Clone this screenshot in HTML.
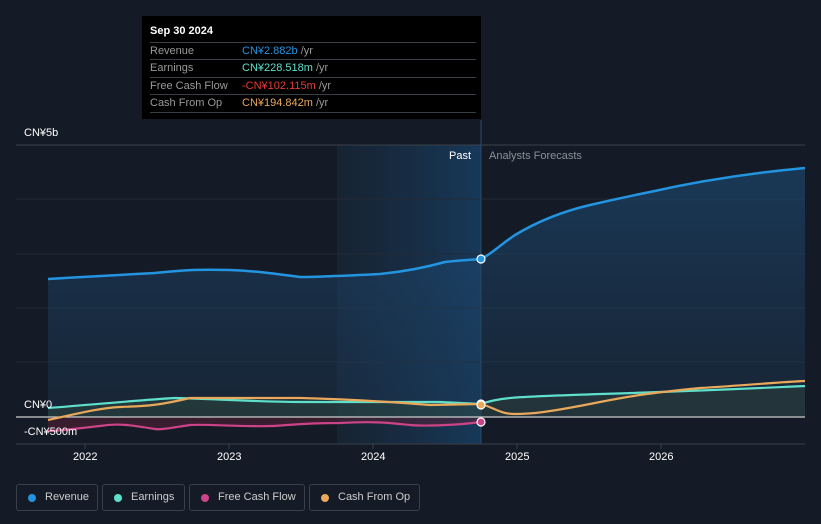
<!DOCTYPE html>
<html><head><meta charset="utf-8"><style>
body{margin:0;width:821px;height:524px;background:#151b26;font-family:"Liberation Sans",sans-serif;overflow:hidden;position:relative}
.tip{position:absolute;left:142px;top:16px;width:339px;height:103px;background:#000;color:#fff;font-size:11px}
.tip .h{position:absolute;left:8px;top:9px;font-weight:bold}
.row{position:absolute;left:8px;width:326px;height:17px;border-top:1px solid #3a3f47;line-height:17px;color:#999}
.row span{position:absolute;left:92px}
.leg{position:absolute;top:484px;height:27px;border:1px solid #3a404a;border-radius:3px;color:#ccc;font-size:11px;line-height:25px;box-sizing:border-box}
.leg i{position:absolute;left:11px;top:9px;width:8px;height:8px;border-radius:50%}
.leg b{font-weight:normal;position:absolute;left:28px}
.t{position:absolute;font-size:11px;color:#fff}
</style></head><body>
<svg width="821" height="524" style="position:absolute;left:0;top:0">
<defs>
<linearGradient id="hl" x1="0" x2="1"><stop offset="0" stop-color="#1a3550" stop-opacity=".3"/><stop offset="1" stop-color="#174066" stop-opacity=".8"/></linearGradient>
<linearGradient id="rv" x1="0" y1="0" x2="0" y2="1"><stop offset="0" stop-color="#1d4f7c" stop-opacity=".7"/><stop offset="1" stop-color="#1d3a58" stop-opacity=".4"/></linearGradient>
</defs>
<rect x="337" y="145" width="144" height="299" fill="url(#hl)"/>
<line x1="16" y1="145" x2="805" y2="145" stroke="#3a404a"/>
<line x1="16" y1="199" x2="805" y2="199" stroke="#232a36"/>
<line x1="16" y1="254" x2="805" y2="254" stroke="#232a36"/>
<line x1="16" y1="308" x2="805" y2="308" stroke="#232a36"/>
<line x1="16" y1="362" x2="805" y2="362" stroke="#232a36"/>
<line x1="481" y1="120" x2="481" y2="444" stroke="#2b4a66"/>
<path d="M48,279 C80,277 100,276 155,273 C175,271 190,269 230,270 C255,271 270,273 300,277 C320,277 340,276 380,274 C400,272 420,269 445,262 C460,260 470,260 481,259 C490,255 500,245 515,235 C535,223 560,212 590,205 C620,198 630,196 650,192 C690,183 740,174 805,168 L805,417 L48,417Z" fill="url(#rv)" opacity=".8"/>
<path d="M48,408 C100,404 140,400 175,398 L300,400 L481,404 L481,417 L48,417Z" fill="#2e4a40" opacity=".5"/>
<path d="M48,417 L481,417 L481,422 C450,426 420,426 410,425 C390,423 375,421 340,423 C300,423 280,426 270,426 C240,427 210,424 190,425 C170,428 160,430 155,429 C130,425 118,423 100,426 C80,428 60,431 48,431Z" fill="#5a2035" opacity=".5"/>
<path d="M481,404 C500,397 515,397 600,394 C700,391 760,388 805,386 L805,417 L481,417Z" fill="#2c3e3c" opacity=".6"/>
<line x1="16" y1="417" x2="805" y2="417" stroke="#ccc" stroke-width="1.2"/>
<line x1="16" y1="444" x2="805" y2="444" stroke="#3a404a"/>
<g stroke="#3a404a"><line x1="85" y1="444" x2="85" y2="449"/><line x1="229" y1="444" x2="229" y2="449"/><line x1="373" y1="444" x2="373" y2="449"/><line x1="517" y1="444" x2="517" y2="449"/><line x1="661" y1="444" x2="661" y2="449"/></g>
<path d="M48,279 C80,277 100,276 155,273 C175,271 190,269 230,270 C255,271 270,273 300,277 C320,277 340,276 380,274 C400,272 420,269 445,262 C460,260 470,260 481,259 C490,255 500,245 515,235 C535,223 560,212 590,205 C620,198 630,196 650,192 C690,183 740,174 805,168" fill="none" stroke="#2394e0" stroke-width="2.5"/>
<path d="M48,408 C100,404 140,400 175,398 C220,399 260,402 300,402 L440,402 L481,404 C500,397 515,397 600,394 C700,391 760,388 805,386" fill="none" stroke="#5ee0cc" stroke-width="2.2"/>
<path d="M48,420 C80,413 100,408 120,407 C150,406 160,405 190,398 L300,398 C340,399 380,401 430,405 L481,404 C495,408 500,414 515,414 C530,414 545,413 600,402 C630,396 650,393 700,388 C750,385 780,382 805,381" fill="none" stroke="#e9a85a" stroke-width="2.2"/>
<path d="M48,431 C60,431 80,428 100,426 C118,423 130,425 155,429 C160,430 170,428 190,425 C210,424 240,427 270,426 C280,426 300,423 340,423 C375,421 390,423 410,425 C420,426 450,426 481,422" fill="none" stroke="#cc4487" stroke-width="2.2"/>
<circle cx="481" cy="259" r="4" fill="#2394e0" stroke="#fff" stroke-width="1.2"/>
<circle cx="481" cy="404" r="4" fill="#5ee0cc" stroke="#fff" stroke-width="1.2"/>
<circle cx="481" cy="405" r="4" fill="#e9a85a" stroke="#fff" stroke-width="1.2"/>
<circle cx="481" cy="422" r="4" fill="#cc4487" stroke="#fff" stroke-width="1.2"/>
</svg>
<div class="t" style="left:24px;top:127px">CN¥5b</div>
<div class="t" style="left:24px;top:399px">CN¥0</div>
<div class="t" style="left:24px;top:426px">-CN¥500m</div>
<div class="t" style="left:449px;top:150px">Past</div>
<div class="t" style="left:489px;top:150px;color:#8a9099">Analysts Forecasts</div>
<div class="t" style="left:73px;top:451px">2022</div>
<div class="t" style="left:217px;top:451px">2023</div>
<div class="t" style="left:361px;top:451px">2024</div>
<div class="t" style="left:505px;top:451px">2025</div>
<div class="t" style="left:649px;top:451px">2026</div>
<div class="tip"><div class="h">Sep 30 2024</div>
<div class="row" style="top:26px">Revenue<span><em style="font-style:normal;color:#2394e0">CN¥2.882b</em> /yr</span></div>
<div class="row" style="top:43px">Earnings<span><em style="font-style:normal;color:#5ee0cc">CN¥228.518m</em> /yr</span></div>
<div class="row" style="top:61px">Free Cash Flow<span><em style="font-style:normal;color:#e83a3a">-CN¥102.115m</em> /yr</span></div>
<div class="row" style="top:78px;border-bottom:1px solid #3a3f47">Cash From Op<span><em style="font-style:normal;color:#e9a85a">CN¥194.842m</em> /yr</span></div>
</div>
<div class="leg" style="left:16px;width:82px"><i style="background:#2394e0"></i><b>Revenue</b></div>
<div class="leg" style="left:102px;width:83px"><i style="background:#5ee0cc"></i><b>Earnings</b></div>
<div class="leg" style="left:189px;width:116px"><i style="background:#cc4487"></i><b>Free Cash Flow</b></div>
<div class="leg" style="left:309px;width:111px"><i style="background:#e9a85a"></i><b>Cash From Op</b></div>
</body></html>
